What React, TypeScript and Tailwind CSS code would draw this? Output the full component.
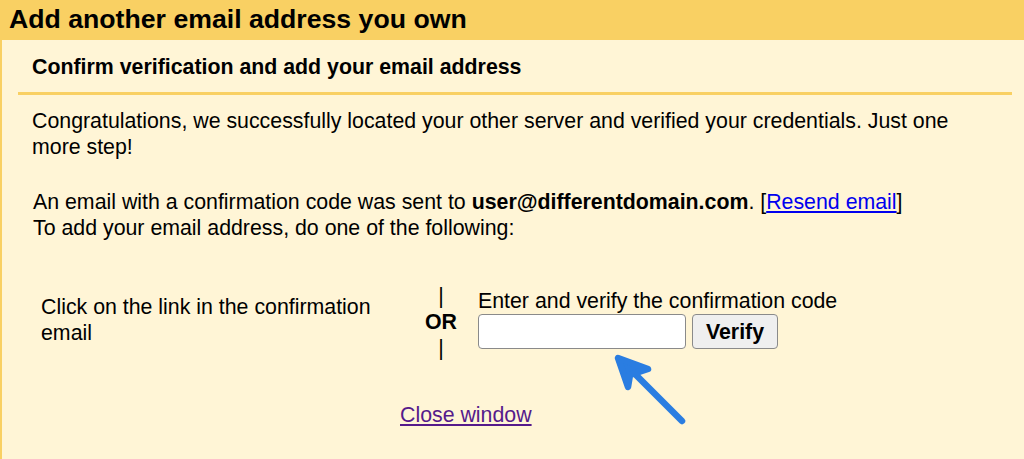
import React from "react";

export default function App() {
  return (
    <div className="relative w-[1024px] h-[459px] overflow-hidden bg-[#fff5d6] font-['Liberation_Sans',Arial,sans-serif] text-black">
      <div className="h-[40px] bg-[#f9d063] pl-[9px] text-[26.67px] font-bold leading-[38px]">
        Add another email address you own
      </div>
      <div className="h-[419px] border-l-2 border-[#f9d063] pl-[16px] pr-[12px]">
        <div className="pl-[14px] pt-[15px] text-[21.33px] font-bold leading-[25px]">
          Confirm verification and add your email address
        </div>
        <div className="mt-[12px] h-[3px] bg-[#f9d063]" />
        <div className="mt-[13px] pl-[14px] pr-[27px] text-[21.33px] leading-[26px]">
          Congratulations, we successfully located your other server and verified your credentials. Just one more step!
        </div>
        <div className="mt-[29px] pl-[15px] text-[21.33px] leading-[26px]">
          <div>
            An email with a confirmation code was sent to <b>user@differentdomain.com</b>. [
            <a href="#" className="text-[#0000ee] underline">Resend email</a>]
          </div>
          <div>To add your email address, do one of the following:</div>
        </div>
        <div className="mt-[42px] flex text-[21.33px] leading-[26px]">
          <div className="ml-[23px] w-[370px] pt-[11px]">Click on the link in the confirmation email</div>
          <div className="w-[60px] flex flex-col items-center">
            <div>|</div>
            <div className="font-bold">OR</div>
            <div>|</div>
          </div>
          <div className="pl-[7px] pt-[6px]">
            <div className="leading-[25px]">Enter and verify the confirmation code</div>
            <div className="flex gap-[6px]">
              <input className="h-[35px] w-[208px] rounded-[4px] border border-[#8a8a8a] bg-white" />
              <button className="h-[35px] w-[86px] rounded-[4px] border border-[#8a8a8a] bg-[#efefef] text-[21.33px] font-bold">
                Verify
              </button>
            </div>
          </div>
        </div>
        <div className="mt-[42px] ml-[382px] text-[21.33px] leading-[25px]">
          <a href="#" className="text-[#551a8b] underline">Close window</a>
        </div>
      </div>
      <svg className="absolute left-[600px] top-[345px]" width="100" height="90" viewBox="0 0 100 90">
        <g stroke="#2a7de1" strokeWidth="6.5" strokeLinecap="round" strokeLinejoin="round" fill="#2a7de1">
          <line x1="82" y1="76" x2="22" y2="16" />
          <polygon points="48,24 18,13 28,42 30,30" />
        </g>
      </svg>
    </div>
  );
}
